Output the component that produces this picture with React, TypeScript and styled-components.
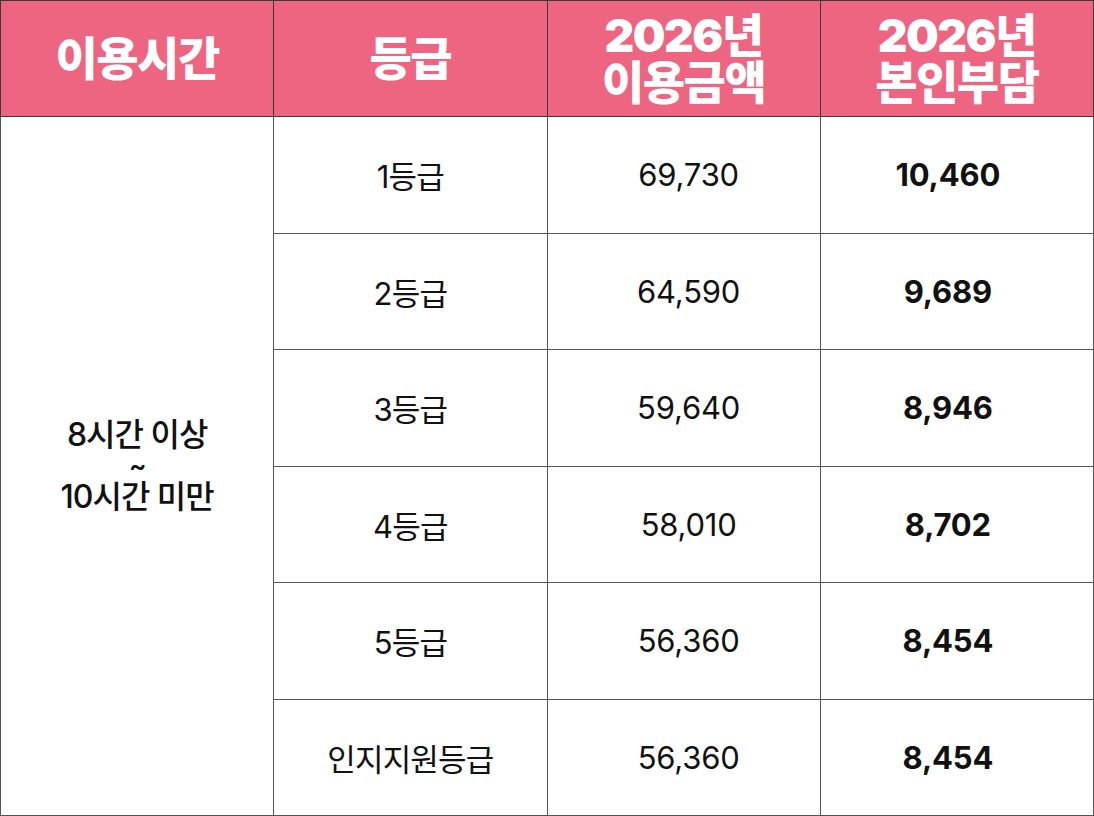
import React from "react";
import styled, { createGlobalStyle } from "styled-components";

const Global = createGlobalStyle`
  html, body { margin: 0; padding: 0; background: #ffffff; }
  body { font-family: Inter, "Noto Sans CJK KR", sans-serif; }
`;

const Table = styled.table`
  width: 1094px;
  height: 816px;
  table-layout: fixed;
  border-collapse: collapse;
  background: #ffffff;
`;

const HeadCell = styled.th`
  height: 115px;
  background: #ee6581;
  color: #ffffff;
  border: 1.5px solid #3a3a3a;
  font-family: Inter, "Noto Sans CJK KR", sans-serif;
  font-weight: 900;
  font-size: 46px;
  line-height: 47px;
  letter-spacing: -1.5px;
  text-align: center;
  vertical-align: middle;
  padding: 0;
`;

const Cell = styled.td<{ $bold?: boolean; $pl?: number; $pr?: number }>`
  height: 114px;
  border: 1.5px solid #555555;
  text-align: center;
  vertical-align: middle;
  padding: 0 ${(p) => p.$pr ?? 0}px 0 ${(p) => p.$pl ?? 0}px;
  color: #111111;
  font-family: Inter, "Noto Sans CJK KR", sans-serif;
  font-size: 31px;
  font-weight: ${(p) => (p.$bold ? 700 : 400)};
  letter-spacing: -0.2px;
`;

const Grade = styled.span`
  font-weight: 400;
  letter-spacing: -0.8px;
`;

const TimeCell = styled(Cell)`
  font-size: 32px;
  font-weight: 500;
  letter-spacing: -1px;
`;

const TimeLine = styled.div`
  line-height: 36px;
`;

const Tilde = styled.div`
  line-height: 26px;
  font-size: 26px;
  font-weight: 600;
`;

const rows = [
  { grade: "1등급", amount: "69,730", self: "10,460" },
  { grade: "2등급", amount: "64,590", self: "9,689" },
  { grade: "3등급", amount: "59,640", self: "8,946" },
  { grade: "4등급", amount: "58,010", self: "8,702" },
  { grade: "5등급", amount: "56,360", self: "8,454" },
  { grade: "인지지원등급", amount: "56,360", self: "8,454" },
];

export default function App() {
  return (
    <>
      <Global />
      <Table>
        <thead>
          <tr>
            <HeadCell>이용시간</HeadCell>
            <HeadCell>등급</HeadCell>
            <HeadCell>
              2026년
              <br />
              이용금액
            </HeadCell>
            <HeadCell>
              2026년
              <br />
              본인부담
            </HeadCell>
          </tr>
        </thead>
        <tbody>
          {rows.map((r, i) => (
            <tr key={i}>
              {i === 0 && (
                <TimeCell rowSpan={rows.length}>
                  <TimeLine>8시간 이상</TimeLine>
                  <Tilde>~</Tilde>
                  <TimeLine>10시간 미만</TimeLine>
                </TimeCell>
              )}
              <Cell>
                <Grade>{r.grade}</Grade>
              </Cell>
              <Cell $pl={10}>{r.amount}</Cell>
              <Cell $bold $pr={18}>
                {r.self}
              </Cell>
            </tr>
          ))}
        </tbody>
      </Table>
    </>
  );
}
